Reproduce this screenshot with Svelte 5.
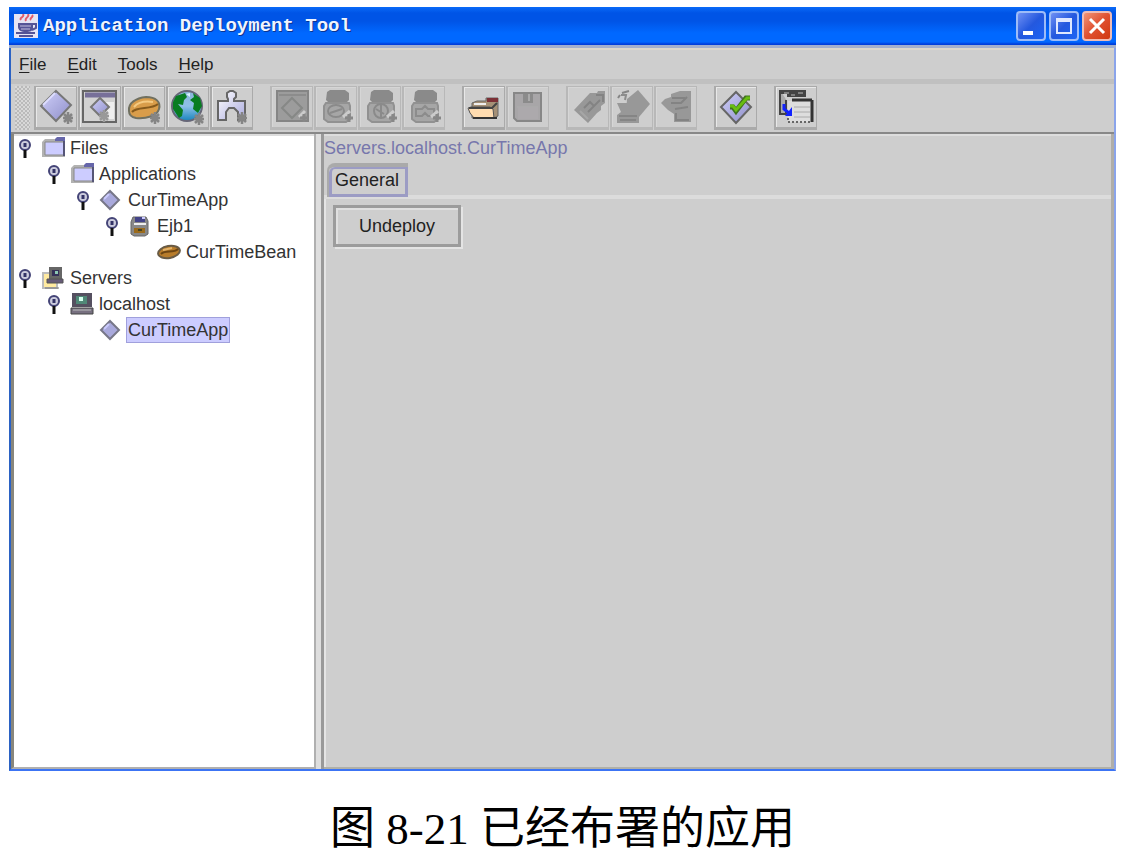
<script lang="ts">
    type Node = {
        id: string;
        label: string;
        icon: string;
        children?: Node[];
    };

    type Tool = { icon: string; label: string; disabled?: boolean };

    const menus = ["File", "Edit", "Tools", "Help"];

    const toolGroups: Tool[][] = [
        [
            { icon: "app", label: "New Application" },
            { icon: "appClient", label: "New Application Client" },
            { icon: "bean", label: "New Enterprise Bean" },
            { icon: "web", label: "New Web Component" },
            { icon: "adapter", label: "New Resource Adapter" },
        ],
        [
            { icon: "addClient", label: "Add Application Client", disabled: true },
            { icon: "addEjb", label: "Add EJB JAR", disabled: true },
            { icon: "addWar", label: "Add Web WAR", disabled: true },
            { icon: "addRar", label: "Add Resource RAR", disabled: true },
        ],
        [
            { icon: "open", label: "Open" },
            { icon: "save", label: "Save", disabled: true },
        ],
        [
            { icon: "edit", label: "Edit Descriptor", disabled: true },
            { icon: "deploy", label: "Deploy", disabled: true },
            { icon: "update", label: "Update Files", disabled: true },
        ],
        [{ icon: "verify", label: "Verifier" }],
        [{ icon: "transfer", label: "Update and Redeploy" }],
    ];

    const tree: Node[] = [
        {
            id: "files",
            label: "Files",
            icon: "folder",
            children: [
                {
                    id: "applications",
                    label: "Applications",
                    icon: "folder",
                    children: [
                        {
                            id: "file-app",
                            label: "CurTimeApp",
                            icon: "diamond",
                            children: [
                                {
                                    id: "ejb1",
                                    label: "Ejb1",
                                    icon: "jar",
                                    children: [{ id: "bean", label: "CurTimeBean", icon: "smallBean" }],
                                },
                            ],
                        },
                    ],
                },
            ],
        },
        {
            id: "servers",
            label: "Servers",
            icon: "servers",
            children: [
                {
                    id: "localhost",
                    label: "localhost",
                    icon: "computer",
                    children: [{ id: "server-app", label: "CurTimeApp", icon: "diamond" }],
                },
            ],
        },
    ];

    let selected = $state("server-app");
    let closed: Record<string, boolean> = $state({});
</script>

{#snippet star(x: number, y: number, color: string)}
    <g transform="translate({x} {y})" stroke={color} stroke-width="2.5">
        <path d="M0-6V6M-5 0H5M-4-4L4 4M4-4L-4 4" />
    </g>
{/snippet}

{#snippet toolIcon(name: string)}
    <svg viewBox="0 0 36 36" width="36" height="36" fill="none" aria-hidden="true">
        {#if name === "app"}
            <path d="M18 2L33 16L18 32L3 17Z" fill="url(#lilac)" stroke="#777" stroke-width="2" />
            <path d="M17 4L5 16" stroke="#ddf" stroke-width="2" />
            {@render star(30, 29, "#858585")}
        {:else if name === "appClient"}
            <path d="M1 2H34V33H1Z" fill="#d2d2d2" stroke="#666" stroke-width="2" />
            <path d="M3 6H33" stroke="#777099" stroke-width="5" />
            <path d="M22 13H32V30H22Z" fill="#eee" />
            <path d="M18 9L27 18L18 27L9 18Z" fill="url(#lilac)" stroke="#777" stroke-width="2" />
            {@render star(22, 27, "#999")}
        {:else if name === "bean"}
            <path d="M3 22C2 14 10 9 20 8C30 8 35 13 33 20C31 27 20 30 10 29C5 28 3 26 3 22Z" fill="#d99d4a" stroke="#707060" stroke-width="2" />
            <path d="M6 23C11 17 25 21 32 15" stroke="#865a1c" stroke-width="2" />
            <path d="M8 18C13 12 20 12 27 13" stroke="#f4ca82" stroke-width="2" />
            {@render star(29, 29, "#858585")}
        {:else if name === "web"}
            <circle cx="17" cy="17" r="15" fill="url(#sea)" stroke="#667" stroke-width="2" />
            <path d="M6 7L15 4L17 8L14 11L13 16L8 15L13 21L12 27L9 29L3 20L3 13Z" fill="#087c21" />
            <path d="M23 4L30 9L32 17L28 24L23 20L24 14L20 11L24 8Z" fill="#087c21" />
            <path d="M16 5L20 4L20 8" fill="#d8f0ff" />
            {@render star(29, 30, "#858585")}
        {:else if name === "adapter"}
            <path d="M4 12H14V10L13 8V4L16 2H19L22 4V8L20 10V12H31V31H24V23L20 19H15L12 23V31H4Z" fill="url(#pale)" stroke="#666" stroke-width="2" />
            {@render star(28, 29, "#858585")}
        {:else if name === "addClient"}
            <path d="M3 2H34V32H3Z" fill="#9c9c9c" stroke="#858585" stroke-width="2" />
            <path d="M5 6H32" stroke="#8c8c8c" stroke-width="2" />
            <path d="M18 9L28 19L18 29L8 19Z" stroke="#868886" stroke-width="2" />
            <path d="M25 28L31 22" stroke="#ccc" stroke-width="3" />
            <path d="M30 25V33M26 29H34" stroke="#888" stroke-width="3" />
        {:else if name === "addEjb" || name === "addWar" || name === "addRar"}
            <path d="M9 3L12 1H27L31 4V11L28 14H11L8 11Z" fill="#8a8a8a" />
            <path d="M8 14H31L32 17V30L28 33H10L6 30V17Z" fill="#a6a6a6" stroke="#919191" stroke-width="2" />
            {#if name === "addEjb"}
                <ellipse cx="18" cy="22" rx="8" ry="6" stroke="#8a8a8a" stroke-width="2" />
                <path d="M12 24L24 20" stroke="#8a8a8a" stroke-width="2" />
            {:else if name === "addWar"}
                <circle cx="19" cy="22" r="7" stroke="#8a8a8a" stroke-width="2" />
                <path d="M19 15V29M14 20L22 25" stroke="#8a8a8a" stroke-width="2" />
            {:else}
                <path d="M10 20H16L19 17L22 20H28V27H22L19 24L16 27H10Z" stroke="#8c8c8c" stroke-width="2" />
            {/if}
            <path d="M25 28L32 22" stroke="#ccc" stroke-width="3" />
            <path d="M31 25V33M27 29H35" stroke="#888" stroke-width="3" />
        {:else if name === "open"}
            <path d="M6 14L11 12H20V9H32V27L28 29H6Z" fill="#a59076" stroke="#666" stroke-width="1" />
            <path d="M21 9H32V13H21Z" fill="#7c3036" />
            <path d="M2 19L5 18H24L27 20L28 29H8L4 24Z" fill="#ffdcb0" stroke="#555" stroke-width="1" />
            <path d="M3 19H26L31 14" stroke="#444" stroke-width="2" />
            <path d="M8 15H20" stroke="#eee" stroke-width="2" />
            <path d="M7 29H31" stroke="#333" stroke-width="2" />
        {:else if name === "save"}
            <path d="M4 4H31V32H7L4 29Z" fill="#a8a6a8" stroke="#878787" stroke-width="2" />
            <path d="M13 5H23V14H13Z" fill="#8b8b8b" />
            <path d="M19 5V12M7 18H28" stroke="#aaa" stroke-width="2" />
            <path d="M8 18H28V30H8Z" fill="#aca9ac" />
        {:else if name === "edit"}
            <path d="M4 21L20 4H27L28 2H35V14L31 17V21L27 24L18 34Z" fill="#989898" />
            <path d="M14 19L20 13L24 17M18 23L30 11M26 6H33V13" stroke="#838383" stroke-width="2" />
            <path d="M10 22L18 30" stroke="#a6a6a6" stroke-width="2" />
        {:else if name === "deploy"}
            <path d="M13 10L24 1L36 15L25 28H12Z" fill="#989898" />
            <path d="M3 14H16V25H25V34H3V26L7 23Z" fill="#989898" />
            <path d="M4 9L6 6M8 4L15 2M5 27H23M6 31H22" stroke="#858585" stroke-width="2" />
            <path d="M7 6H12L11 11" stroke="#8c8c8c" stroke-width="2" />
        {:else if name === "update"}
            <path d="M3 14L7 10L13 8V5L22 2H33V33H16V25L10 21Z" fill="#989898" />
            <path d="M14 9H27M13 14H23L29 8M17 20L30 18M18 24V31H31" stroke="#838383" stroke-width="2" />
        {:else if name === "verify"}
            <path d="M18 3L33 18L18 34L3 18Z" fill="url(#lilac)" stroke="#666" stroke-width="2" />
            <path d="M12 18H15L18 22L28 9H32" stroke="#407020" stroke-width="5" />
            <path d="M12 17H15L18 21L29 9H32" stroke="#68bd12" stroke-width="3" />
        {:else if name === "transfer"}
            <path d="M2 1V25H8V12H9" fill="#aaa" stroke="#444" stroke-width="2" />
            <path d="M1 1H28V8H9V5H1Z" fill="#444" />
            <path d="M6 4H11M13 6H17M20 4H25" stroke="#bbb" stroke-width="1" />
            <path d="M10 12H34V33H10Z" fill="#ddd" />
            <path d="M10 25V33H34" stroke="#666" stroke-width="2" stroke-dasharray="2 2" />
            <path d="M14 11H34M34 11V33" stroke="#333" stroke-width="3" />
            <path d="M16 18H32M16 23H32M16 28H32" stroke="#aaa" stroke-width="1" />
            <path d="M6 15V20L11 24" stroke="#12f" stroke-width="3" />
            <path d="M14 18V27H7Z" fill="#12f" />
        {/if}
    </svg>
{/snippet}

{#snippet treeIcon(name: string)}
    <svg viewBox="0 0 26 24" width="26" height="24" fill="none" aria-hidden="true">
        {#if name === "folder"}
            <path d="M1 6L4 3H24V21H1Z" fill="#b2b2b2" />
            <path d="M4 6H23V19H4Z" fill="#ccf" stroke="#888" stroke-width="1" />
            <path d="M14 3L16 1H24V5H14Z" fill="#66a" />
            <path d="M23 5V20" stroke="#557" stroke-width="2" />
        {:else if name === "diamond"}
            <path d="M11 3L20 12L11 21L2 12Z" fill="#a9a9dc" stroke="#777788" stroke-width="2" />
            <path d="M10 6L5 11" stroke="#ccf" stroke-width="2" />
        {:else if name === "jar"}
            <path d="M5 3H18L20 7V20L17 22H6L3 20V8Z" fill="#888" stroke="#666" stroke-width="1" />
            <path d="M7 3H17V8H7Z" fill="#448" />
            <path d="M14 3H17V5H14Z" fill="#ccf" />
            <path d="M6 10H18" stroke="#eee" stroke-width="2" />
            <path d="M6 14H17V19H6Z" fill="#9b6b1c" />
            <path d="M10 16H14" stroke="#442" stroke-width="2" />
        {:else if name === "smallBean"}
            <ellipse cx="12" cy="12" rx="11" ry="6" transform="rotate(-10 12 12)" fill="#b87c2a" stroke="#695b45" stroke-width="2" />
            <path d="M4 14C9 9 16 14 21 9" stroke="#6d4512" stroke-width="2" />
            <path d="M6 10L15 8" stroke="#e3b36a" stroke-width="2" />
        {:else if name === "servers"}
            <path d="M2 7H16V22H2Z" fill="#ffeaa0" stroke="#bbb" stroke-width="2" />
            <path d="M8 1H21V13H8Z" fill="#666" />
            <path d="M11 4H18V10H11Z" fill="#353058" />
            <path d="M14 5H17V8H14Z" fill="#8cc7b2" />
            <path d="M6 13H22V17H6Z" fill="#665b77" stroke="#555" stroke-width="1" />
            <path d="M4 22H18" stroke="#777" stroke-width="1" />
        {:else if name === "computer"}
            <path d="M2 1H22V15H2Z" fill="#555060" />
            <path d="M6 4H17V12H6Z" fill="#508877" />
            <path d="M9 5H13V9H9Z" fill="#d5ffee" />
            <path d="M1 16H23V22H1Z" fill="#777080" stroke="#444" stroke-width="1" />
            <path d="M3 18H21" stroke="#bbb" stroke-width="1" />
        {/if}
    </svg>
{/snippet}

{#snippet branch(nodes: Node[])}
    <ul>
        {#each nodes as node (node.id)}
            <li>
                <div class="row">
                    {#if node.children}
                        <button
                            class="handle"
                            class:closed={closed[node.id]}
                            aria-label="Toggle {node.label}"
                            onclick={() => (closed[node.id] = !closed[node.id])}
                        >
                            <svg viewBox="0 0 12 20" width="12" height="20" fill="none" aria-hidden="true">
                                <circle cx="6" cy="7" r="5" fill="#ccd" stroke="#447" stroke-width="2" />
                                <path d="M6 5V9" stroke="#336" stroke-width="3" />
                                <path d="M6 12V20" stroke="#111" stroke-width="3" />
                            </svg>
                        </button>
                    {:else}
                        <span class="handle"></span>
                    {/if}
                    {@render treeIcon(node.icon)}
                    <button
                        class="node"
                        class:selected={selected === node.id}
                        onclick={() => (selected = node.id)}>{node.label}</button>
                </div>
                {#if node.children && !closed[node.id]}
                    {@render branch(node.children)}
                {/if}
            </li>
        {/each}
    </ul>
{/snippet}

<svg class="defs" aria-hidden="true">
    <defs>
        <linearGradient id="lilac" x1="0" y1="0" x2="1" y2="1">
            <stop offset="0" stop-color="#d0d0fa" />
            <stop offset="1" stop-color="#8e8ec8" />
        </linearGradient>
        <linearGradient id="pale" x1="0" y1="0" x2="1" y2="1">
            <stop offset="0" stop-color="#fff" />
            <stop offset="1" stop-color="#aaaade" />
        </linearGradient>
        <linearGradient id="sea" x1="0" y1="0" x2="0" y2="1">
            <stop offset="0" stop-color="#8ab4d8" />
            <stop offset="0.5" stop-color="#8fc0e8" />
            <stop offset="1" stop-color="#1684bd" />
        </linearGradient>
    </defs>
</svg>

<figure>
    <div class="window">
        <header class="titlebar">
            <svg viewBox="0 0 24 24" width="24" height="24" fill="none" aria-hidden="true">
                <path d="M0 0H24V24H0Z" fill="#e6e4f4" />
                <path d="M7 6C5 3 11 4 9 0M12 7C10 3 16 4 14 0M17 6C15 4 20 3 18 1" stroke="#e35d6c" stroke-width="2" />
                <path d="M4 9H19V14C19 17 16 18 12 18C7 18 4 16 4 13Z" fill="#555497" />
                <path d="M18 10H22V14L18 16" stroke="#555497" stroke-width="2" />
                <path d="M6 12H17M7 15H16" stroke="#c4bede" stroke-width="1" />
                <path d="M2 19H21M5 22H19" stroke="#555497" stroke-width="2" />
            </svg>
            <h1>Application Deployment Tool</h1>
            <div class="controls">
                <button aria-label="Minimize">
                    <svg viewBox="0 0 26 26" width="26" height="26"><path d="M5 18H15V22H5Z" fill="#fff" /></svg>
                </button>
                <button aria-label="Maximize">
                    <svg viewBox="0 0 26 26" width="26" height="26" fill="none" stroke="#dfe8ff">
                        <path d="M6 7H20V20H6Z" stroke-width="2" />
                        <path d="M5 7H21" stroke-width="4" />
                    </svg>
                </button>
                <button class="close" aria-label="Close">
                    <svg viewBox="0 0 26 26" width="26" height="26" stroke="#fff" stroke-width="3">
                        <path d="M6 6L20 20M20 6L6 20" />
                    </svg>
                </button>
            </div>
        </header>

        <nav class="menubar">
            {#each menus as menu}
                <button><u>{menu[0]}</u>{menu.slice(1)}</button>
            {/each}
        </nav>

        <div class="toolbar">
            <span class="grip"></span>
            {#each toolGroups as group}
                <div class="group">
                    {#each group as tool}
                        <button aria-label={tool.label} disabled={tool.disabled}>
                            {@render toolIcon(tool.icon)}
                        </button>
                    {/each}
                </div>
            {/each}
        </div>

        <div class="panes">
            <aside>{@render branch(tree)}</aside>
            <div class="divider"></div>
            <main>
                <p class="path">Servers.localhost.CurTimeApp</p>
                <div class="tabs" role="tablist">
                    <button role="tab" aria-selected="true"><span>General</span></button>
                </div>
                <div class="tab-body" role="tabpanel">
                    <button class="undeploy">Undeploy</button>
                </div>
            </main>
        </div>
    </div>
    <figcaption>图 8-21 已经布署的应用</figcaption>
</figure>

<style>
    :global(body) {
        margin: 0;
        background: #fff;
    }

    button {
        margin: 0;
        padding: 0;
        border: 0;
        background: none;
        font: inherit;
        color: inherit;
    }

    svg {
        display: block;
        flex: none;
    }

    .defs {
        position: absolute;
        width: 0;
        height: 0;
    }

    figure {
        display: flex;
        flex-direction: column;
        box-sizing: border-box;
        min-height: 100vh;
        margin: 0;
        padding: 7px 14px 0 9px;
    }

    .window {
        display: flex;
        flex-direction: column;
        flex: 1;
        border: solid #3c74f4;
        border-width: 0 2px 2px;
        border-left-color: #2b62c4;
        border-right-color: #8aa4ea;
        background: #cecece;
        color: #333;
        font-family: "Liberation Sans", Arial, sans-serif;
        font-size: 18px;
    }

    .titlebar {
        display: flex;
        align-items: center;
        gap: 5px;
        height: 38px;
        margin: 0 -2px;
        padding: 0 4px 0 5px;
        border-bottom: 3px solid #a3b0cc;
        background: linear-gradient(#0a6af8 0, #0054e6 6px, #0054e6 14px, #0068ff 26px, #0068ff 35px, #0040dc 37px);
    }

    h1 {
        flex: 1;
        margin: 0;
        color: #f0f4ff;
        font-family: "Liberation Mono", monospace;
        font-size: 19px;
        font-weight: 700;
        line-height: 24px;
        text-shadow: 1px 1px #0a3490;
    }

    .controls {
        display: flex;
        gap: 3px;
    }

    .controls button {
        border: 2px solid #9dbcf8;
        border-radius: 4px;
        background: linear-gradient(135deg, #6f90f4, #2458de 50%, #1c64f4);
    }

    .controls .close {
        border-color: #f0bcb4;
        background: linear-gradient(135deg, #f09478, #e05030 50%, #d03810);
    }

    .menubar {
        display: flex;
        gap: 21px;
        padding: 6px 8px 5px;
        border-top: 2px solid #dcd8cc;
        border-bottom: 5px solid #c0c0c0;
        font-size: 17px;
        line-height: 18px;
    }

    .menubar button {
        color: #222;
    }

    .menubar u {
        text-underline-offset: 2px;
    }

    .toolbar {
        display: flex;
        gap: 17px;
        padding: 2px 4px;
        border-bottom: 2px solid #888;
    }

    .grip {
        width: 15px;
        margin-right: -13px;
        background: repeating-conic-gradient(#bababa 0 25%, #d8d8d8 0 50%) 0 0 / 4px 4px;
    }

    .group {
        display: flex;
        gap: 1px;
    }

    .group button {
        padding: 2px;
        border: solid #aaa;
        border-width: 1px 1px 3px 2px;
        box-shadow: inset 1px 1px #e8e8e8;
    }

    .group button:disabled {
        border-color: #b8b8b8;
        box-shadow: inset 1px 1px #d6d6d6;
    }

    .panes {
        display: flex;
        flex: 1;
    }

    aside {
        width: 300px;
        padding-top: 1px;
        border: solid #b0b0b0;
        border-width: 0 2px 2px 3px;
        border-left-color: #88867c;
        background: #fff;
        box-shadow: inset 0 2px #ddd;
    }

    .divider {
        width: 5px;
        border-right: 3px solid #999;
        background: #dedede;
    }

    ul {
        margin: 0;
        padding: 0 0 0 29px;
        list-style: none;
    }

    aside > ul {
        padding-left: 5px;
    }

    .row {
        display: flex;
        align-items: center;
        height: 26px;
    }

    .handle {
        width: 12px;
        margin-right: 10px;
    }

    .handle.closed {
        transform: rotate(-90deg);
    }

    .node {
        margin-left: 1px;
        padding: 0 1px;
        border: 1px solid transparent;
        line-height: 24px;
        white-space: nowrap;
    }

    .node.selected {
        border-color: #a0a0dc;
        background: #ccf;
    }

    main {
        display: flex;
        flex: 1;
        flex-direction: column;
        border-right: 3px solid #b0aea8;
        border-bottom: 2px solid #b0b0a8;
        box-shadow: inset 0 2px #ddd;
    }

    .path {
        margin: 0;
        padding: 4px 0 0;
        color: #7777ac;
        line-height: 20px;
    }

    .tabs {
        padding: 5px 3px 0;
        border-bottom: 4px solid #dcdcdc;
    }

    .tabs button {
        display: block;
        margin-bottom: -2px;
        border: solid #aaa;
        border-width: 4px 0 0 2px;
        border-top-left-radius: 8px;
        color: #222;
    }

    .tabs span {
        display: block;
        padding: 0 6px 3px 3px;
        border: 3px solid #9c9cc4;
        border-width: 2px 3px 3px;
        border-top-left-radius: 6px;
        line-height: 22px;
    }

    .tab-body {
        flex: 1;
        padding: 6px 7px;
        border-left: 2px solid #e4e4e4;
    }

    .undeploy {
        padding: 8px 23px;
        border: 3px solid #9c9c9c;
        box-shadow: inset 2px 2px #e0e0e0, 2px 2px #e4e4e4;
        color: #222;
        line-height: 20px;
    }

    figcaption {
        padding-top: 30px;
        color: #000;
        font-family: "Liberation Serif", "Noto Sans CJK SC", serif;
        font-size: 45px;
        line-height: 56px;
        text-align: center;
    }
</style>
